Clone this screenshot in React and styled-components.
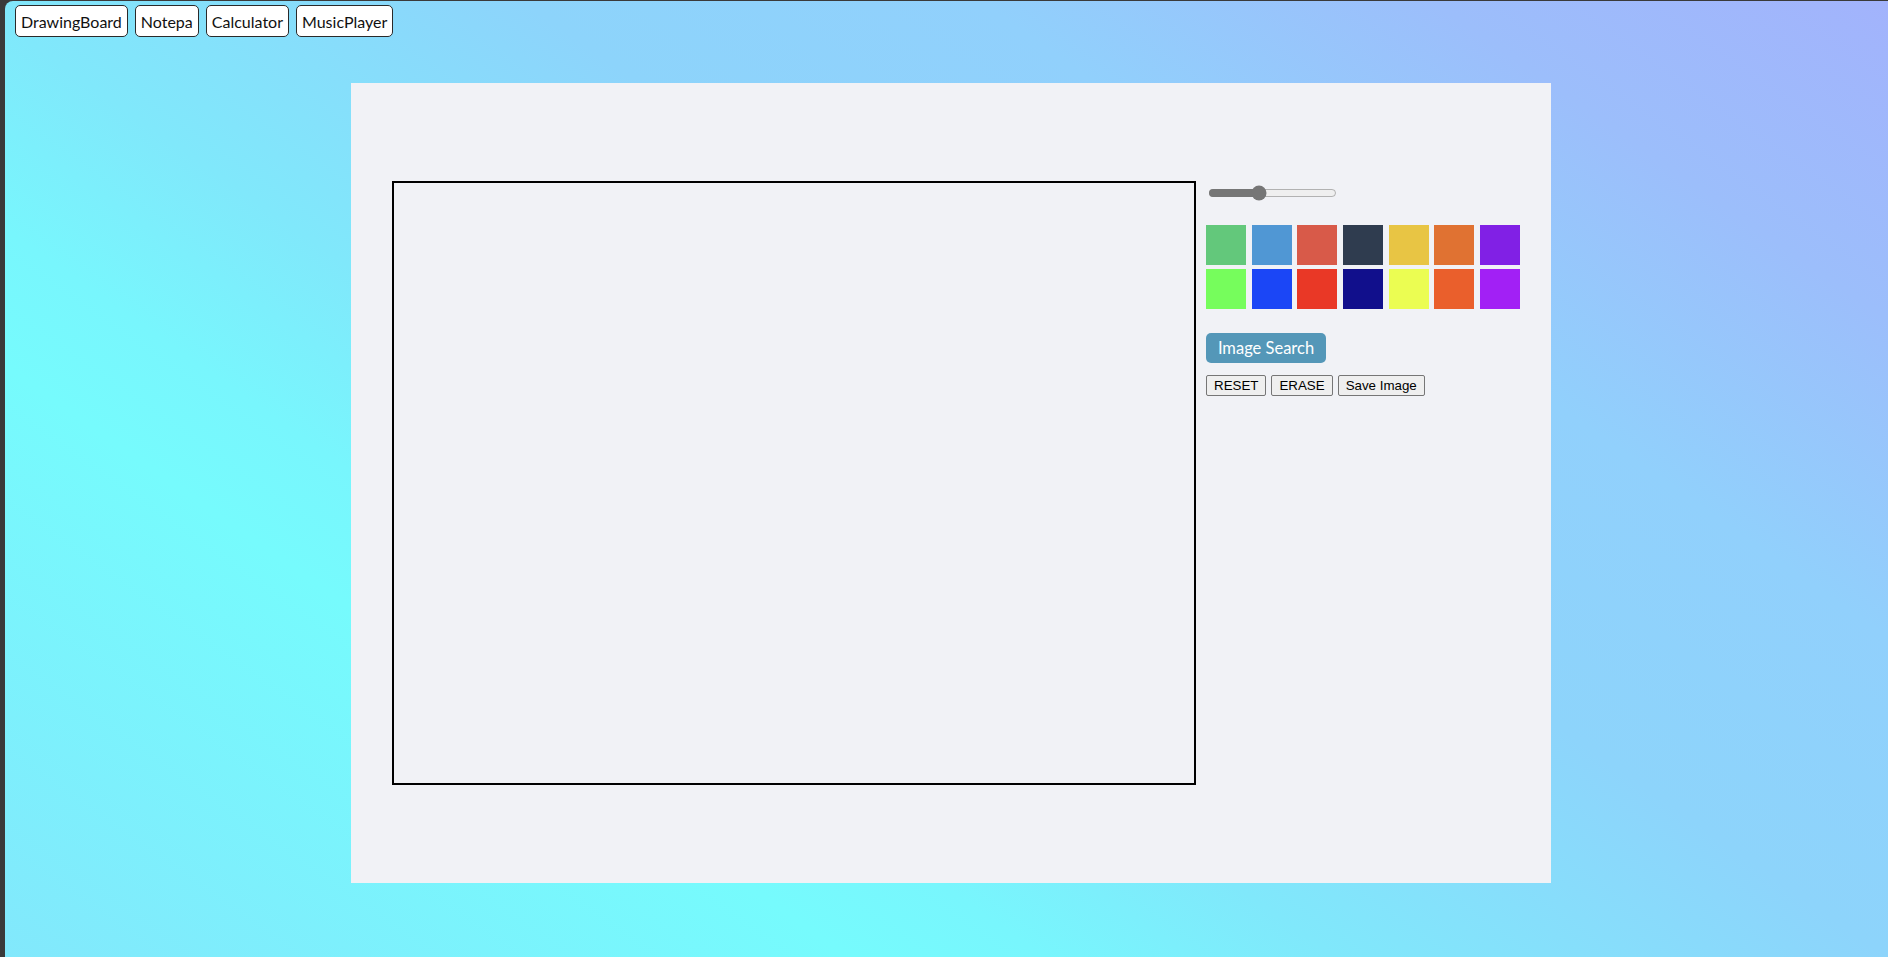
import React from "react";
import styled, { createGlobalStyle } from "styled-components";

const GlobalStyle = createGlobalStyle`
  html, body {
    margin: 0;
    padding: 0;
    background: #3a3a3a;
    overflow: hidden;
  }
`;

const palette = [
  "#63c87b", "#5097d4", "#d85a49", "#2f3c4f", "#e8c544", "#e07232", "#8120e5",
  "#76fd5c", "#1b46f6", "#e93826", "#110f8c", "#ebfd52", "#ea5f2c", "#a220f5"
];

export default function App() {
  return (
    <>
      <GlobalStyle />
      <Frame>
        <Nav>
          <NavButton>DrawingBoard</NavButton>
          <NavButton>Notepa</NavButton>
          <NavButton>Calculator</NavButton>
          <NavButton>MusicPlayer</NavButton>
        </Nav>
        <Stage>
          <Panel>
            <Canvas />
            <Controls>
              <Slider type="range" min="0" max="100" defaultValue="38" />
              <Swatches>
                {palette.map(c => (
                  <Swatch key={c} color={c} />
                ))}
              </Swatches>
              <SearchButton>Image Search</SearchButton>
              <Actions>
                <ActionButton>RESET</ActionButton>
                <ActionButton>ERASE</ActionButton>
                <ActionButton>Save Image</ActionButton>
              </Actions>
            </Controls>
          </Panel>
        </Stage>
      </Frame>
    </>
  );
}

const Frame = styled.div`
  margin: 1px 0 0 5px;
  height: 956px;
  border-top-left-radius: 8px;
  background: linear-gradient(
    35deg,
    #82e8fc 0%,
    #76fbfd 26%,
    #78f6fd 32%,
    #80e8fb 41%,
    #8dd4fb 58%,
    #91d0fc 72%,
    #9cbefb 86%,
    #a2b3fc 100%
  );
`;

const Nav = styled.nav`
  display: flex;
  gap: 7px;
  padding: 4px 10px 0;
`;

const NavButton = styled.button`
  height: 32px;
  padding: 0 5px;
  background: #fff;
  border: 1px solid #2a2a2a;
  border-radius: 5px;
  font-family: Lato, "Noto Sans", sans-serif;
  font-size: 16px;
  color: #111;
`;

const Stage = styled.div`
  display: flex;
  justify-content: center;
  padding: 46px 0 0 9px;
`;

const Panel = styled.section`
  box-sizing: border-box;
  width: 1200px;
  height: 800px;
  background: #f1f2f6;
  display: flex;
  align-items: flex-start;
  padding: 98px 0 0 41px;
`;

const Canvas = styled.div`
  width: 800px;
  height: 600px;
  border: 2px solid #000;
  flex-shrink: 0;
`;

const Controls = styled.div`
  display: flex;
  flex-direction: column;
  align-items: flex-start;
  margin-left: 10px;
`;

const Slider = styled.input`
  width: 129px;
  height: 16px;
  margin: 4px 0 0 2px;
  accent-color: #767676;
`;

const Swatches = styled.div`
  display: grid;
  grid-template-columns: repeat(7, 40px);
  column-gap: 5.67px;
  row-gap: 4px;
  margin-top: 24px;
`;

const Swatch = styled.div`
  width: 40px;
  height: 40px;
  background: ${p => p.color};
`;

const SearchButton = styled.button`
  margin-top: 24px;
  width: 120px;
  height: 30px;
  padding: 0;
  border: none;
  border-radius: 5px;
  background: #5497b8;
  color: #fff;
  font-family: Lato, "Noto Sans", sans-serif;
  font-size: 16.5px;
`;

const Actions = styled.div`
  display: flex;
  gap: 5px;
  margin-top: 12px;
`;

const ActionButton = styled.button`
  padding: 2px 7px;
  background: #efefef;
  border: 1px solid #767676;
  border-radius: 2px;
  font-family: "Liberation Sans", Arial, sans-serif;
  font-size: 13.33px;
  color: #000;
`;
